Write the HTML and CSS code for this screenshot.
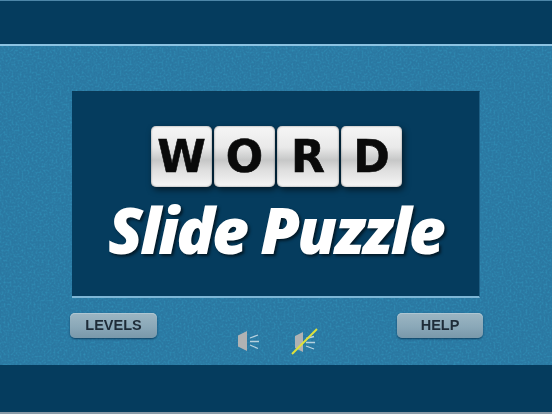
FILE: index.html
```html
<!DOCTYPE html>
<html lang="en">
<head>
<meta charset="utf-8">
<title>Word Slide Puzzle</title>
<link rel="stylesheet" href="styles.css">
</head>
<body>
<div class="screen">
  <div class="top-bar"></div>
  <main class="main">
    <section class="panel">
      <div class="tiles">
        <span class="tile">W</span>
        <span class="tile">O</span>
        <span class="tile tile-wide">R</span>
        <span class="tile">D</span>
      </div>
      <h1 class="title">Slide Puzzle</h1>
    </section>
    <div class="controls">
      <button class="btn">LEVELS</button>
      <div class="sound">
        <svg class="icon" viewBox="0 0 24 24" width="24" height="24" aria-label="Sound on">
          <path class="cone" d="M1 6.500 L10 2 V22 L1 17.500 Z"/>
          <path class="wave" d="M13 9 L21 6 M13 12.500 L22 12.500 M13 16 L21 19.500"/>
        </svg>
        <svg class="icon" viewBox="0 0 28 28" width="28" height="28" aria-label="Sound off">
          <path class="cone" d="M4 9 L12 5 V25 L4 21 Z"/>
          <path class="wave" d="M15 11.500 L23 9.500 M15 15.500 L24 15.500 M15 19 L23 22"/>
          <path class="slash" d="M1 27 L26 2"/>
        </svg>
      </div>
      <button class="btn btn-help">HELP</button>
    </div>
  </main>
  <div class="bottom-bar"></div>
  <svg class="grain" width="552" height="414" aria-hidden="true">
    <filter id="noise" x="0" y="0" width="100%" height="100%">
      <feTurbulence type="fractalNoise" baseFrequency="0.5" numOctaves="2" seed="4"/>
      <feColorMatrix type="matrix" values="0 0 0 0 0.55  0 0 0 0 0.8  0 0 0 0 0.95  1.6 0 0 0 -0.7"/>
    </filter>
    <rect class="grain-rect" x="0" y="46" width="552" height="45" filter="url(#noise)"/>
    <rect class="grain-rect" x="0" y="91" width="72" height="274" filter="url(#noise)"/>
    <rect class="grain-rect" x="480" y="91" width="72" height="274" filter="url(#noise)"/>
    <rect class="grain-rect" x="72" y="298" width="408" height="67" filter="url(#noise)"/>
  </svg>
</div>
</body>
</html>
```
FILE: styles.css
```css
* { box-sizing: border-box; }
html, body { margin: 0; padding: 0; background: #2a78a2; }
.screen {
  position: relative;
  width: 552px;
  height: 414px;
  display: flex;
  flex-direction: column;
  overflow: hidden;
  font-family: "Liberation Sans", Arial, sans-serif;
}
.top-bar {
  height: 46px;
  background: #053c5e;
  border-top: 1px solid #4d86a8;
  border-bottom: 2px solid #8cc3e2;
}
.main {
  flex: 1;
  padding: 45px 69px 0 70px;
  background: #2a78a2;
  display: flex;
  flex-direction: column;
}
.panel {
  width: 408px;
  height: 207px;
  margin-left: 2px;
  background: #053c5e;
  border-top: 1px solid #0a3a58;
  border-right: 1px solid #1d5f85;
  border-bottom: 2px solid #7db6d6;
  display: flex;
  flex-direction: column;
  align-items: center;
  padding-top: 34px;
}
.tiles {
  display: flex;
  gap: 2px;
  margin-left: 2px;
  filter: drop-shadow(2px 3px 3px rgba(0, 0, 0, .55));
}
.tile {
  width: 61px;
  height: 61px;
  border-radius: 5px;
  background: linear-gradient(#f6f6f6 0%, #e9e9e9 35%, #c6c7c7 56%, #dedede 72%, #f6f6f6 100%);
  box-shadow: inset 0 0 2px #777;
  color: #0a0a0a;
  font-family: "DejaVu Sans", sans-serif;
  font-weight: 700;
  font-size: 44px;
  line-height: 61px;
  text-align: center;
  -webkit-text-stroke: .6px #0a0a0a;
}
.tile-wide { width: 62px; }
.title {
  margin: 4px 0 0;
  color: #fff;
  font-family: "Open Sans", sans-serif;
  font-style: italic;
  font-weight: 800;
  font-size: 64px;
  line-height: 78px;
  letter-spacing: -2.800px;
  white-space: nowrap;
  text-shadow: 2px 2px 3px rgba(0, 0, 0, .6);
}
.controls {
  display: flex;
  justify-content: space-between;
  align-items: flex-start;
  margin-top: 15px;
  position: relative;
  z-index: 1;
}
.btn {
  width: 87px;
  height: 25px;
  padding: 0;
  border: 0;
  border-radius: 5px;
  background: linear-gradient(#9db6c3, #8aa8b8 55%, #7998aa);
  box-shadow: 0 1px 2px rgba(0, 40, 70, .7), inset 0 1px 0 #afc6d2;
  color: #1e2c38;
  font-family: "Liberation Sans", Arial, sans-serif;
  font-weight: 700;
  font-size: 14.500px;
  line-height: 25px;
  text-align: center;
}
.btn-help { width: 86px; }
.sound {
  display: flex;
  align-items: center;
  gap: 30px;
  margin-top: 14px;
  margin-left: 2px;
}
.icon { display: block; }
.cone { fill: #b0b2b3; }
.wave { fill: none; stroke: #b6d2df; stroke-width: 1.300; }
.slash { fill: none; stroke: #dfe23a; stroke-width: 2; }
.bottom-bar {
  height: 49px;
  background: #053c5e;
  border-bottom: 2px solid #8a9aa6;
}
.grain {
  position: absolute;
  left: 0;
  top: 0;
  pointer-events: none;
  opacity: .3;
  mix-blend-mode: overlay;
}
.grain-rect { fill: #fff; }
```
